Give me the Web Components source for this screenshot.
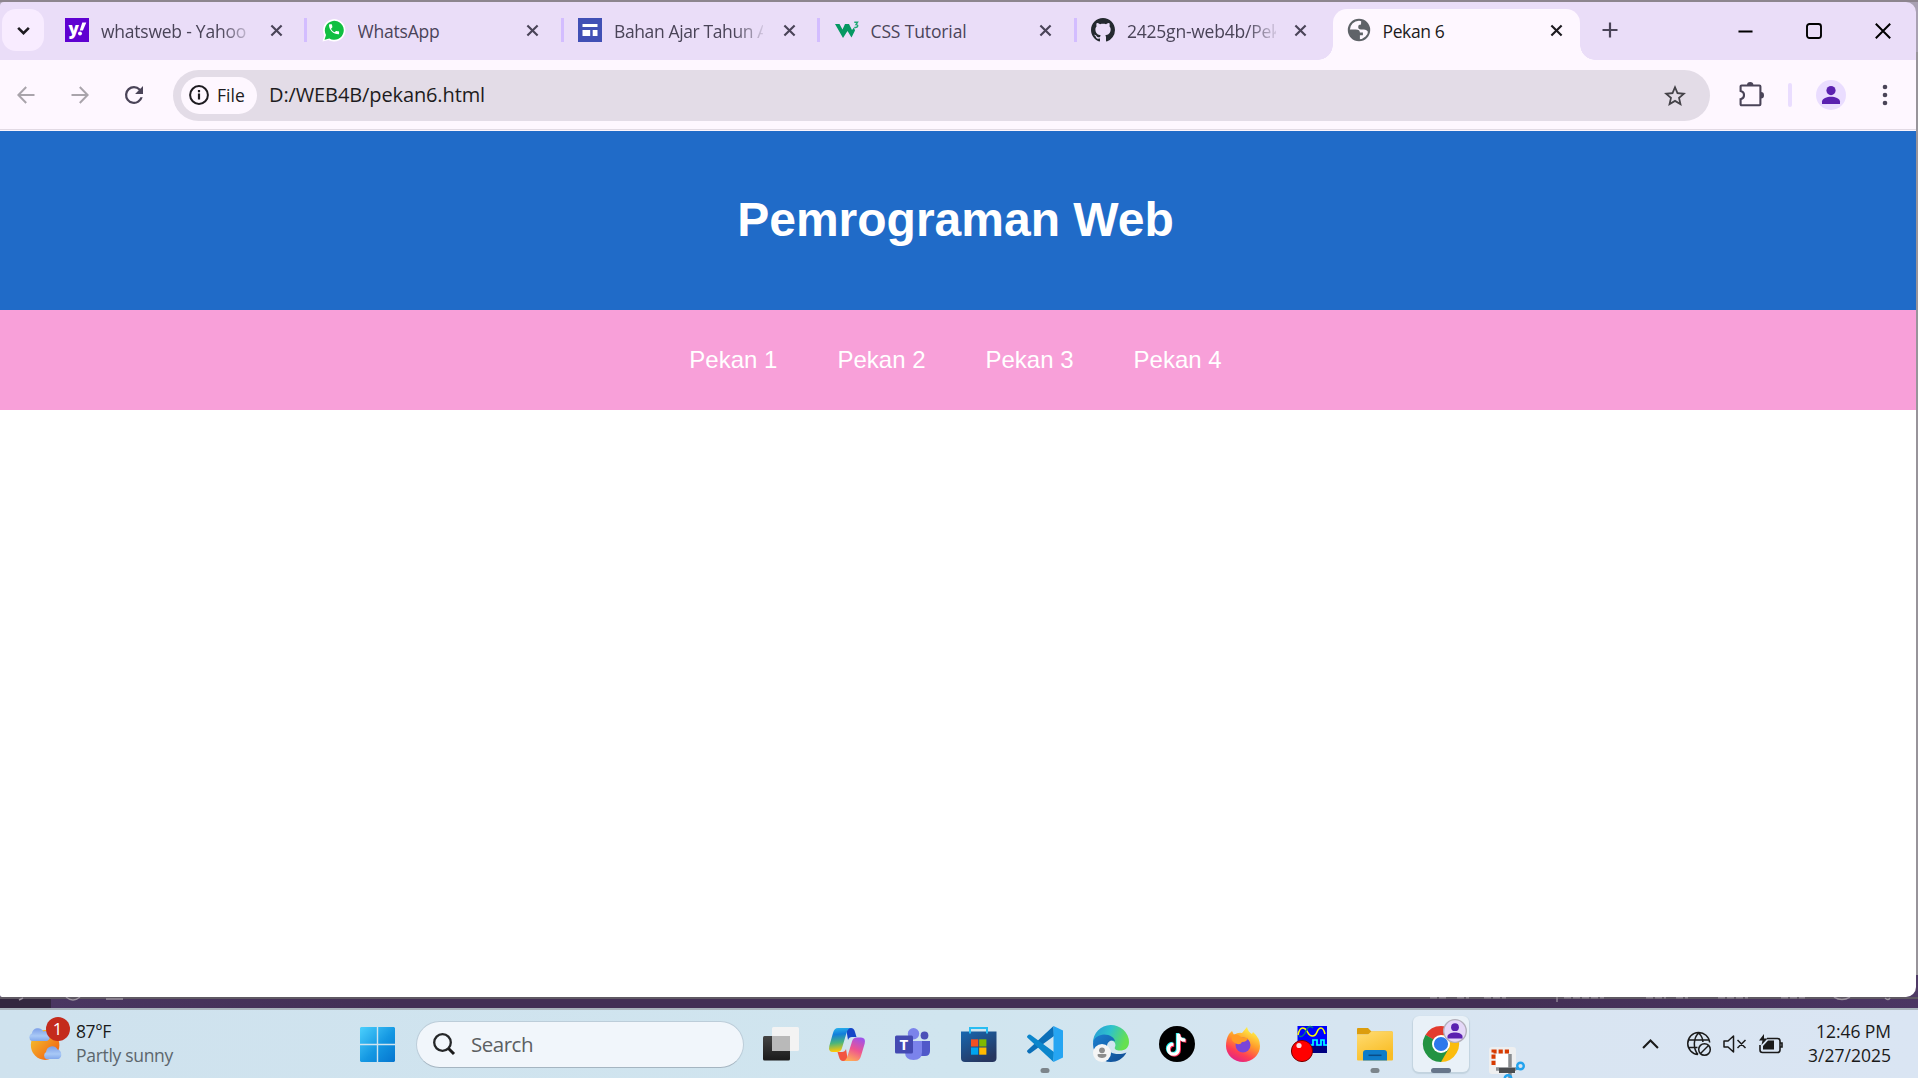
<!DOCTYPE html>
<html lang="en">
<head>
<meta charset="utf-8">
<title>Pekan 6</title>
<style>
html,body{margin:0;height:100%;overflow:hidden}
body{font-family:"Open Sans","Noto Sans",sans-serif}
</style>
</head>
<body>
<desk-top></desk-top>
<script>
const ICONS = {
down:['0 0 14 14','<path d="M2 4.5l5 5 5-5" fill="none" stroke="#1d1b20" stroke-width="2.4"/>'],
x:['0 0 14 14','<path d="M1.5 1.5l11 11M12.500 1.500l-11 11" stroke="currentColor" stroke-width="2.3"/>'],
yahoo:['0 0 24 24','<path d="M0 0h24v24H0z" fill="#5f01d1"/><text x="3.500" y="17" font-family="Open Sans" font-weight="800" font-size="17" fill="#fff">y</text><path d="M17.300 4.500h4l-3.400 8h-3.200z" fill="#fff"/><circle cx="15" cy="15.500" r="2" fill="#fff"/>'],
whatsapp:['0 0 24 24','<path d="M.5 23.500l1.800-6A11.200 11.200 0 1 1 6.500 21.900z" fill="#fff"/><path d="M2.500 21.700l1.500-4.800A9.500 9.500 0 1 1 7.400 20.400z" fill="#10bf41"/><path transform="translate(5.300 4.600) scale(.56)" fill="#fff" d="M6.620 10.790c1.440 2.830 3.760 5.140 6.590 6.590l2.200-2.200c.27-.27.67-.36 1.020-.24 1.120.37 2.330.57 3.570.57.55 0 1 .45 1 1V20c0 .55-.45 1-1 1-9.390 0-17-7.610-17-17 0-.55.45-1 1-1h3.500c.55 0 1 .45 1 1 0 1.250.2 2.450.57 3.570.11.35.03.74-.25 1.020l-2.200 2.200z"/>'],
sites:['0 0 24 24','<path d="M0 0h24v24H0z" fill="#4050b5"/><path d="M4.500 6h15v3h-15zM4.500 12h7.700v6H4.500zM14.700 12h4.800v6h-4.800z" fill="#fff"/>'],
w3:['0 0 24 24','<path d="M0 6h4.500l3 5.500L10 6h4l3 6 2-2.500 1 3-3.500 7L12.500 13 8 20z" fill="#059862"/><path d="M19.300 4.300h3.200L21 6.500c2.600 0 2.300 3.700-1.700 2.900" fill="none" stroke="#20a873" stroke-width="1.400"/>'],
github:['0 0 16 16','<path fill="#24292f" d="M8 0C3.580 0 0 3.580 0 8c0 3.540 2.290 6.530 5.470 7.590.4.070.55-.17.55-.38 0-.19-.01-.82-.01-1.490-2.010.37-2.530-.49-2.690-.94-.09-.23-.48-.94-.82-1.130-.28-.15-.68-.52-.01-.53.63-.01 1.080.58 1.230.82.72 1.210 1.870.87 2.330.66.07-.52.28-.87.51-1.070-1.780-.2-3.640-.89-3.640-3.950 0-.87.31-1.590.82-2.150-.08-.2-.36-1.020.08-2.120 0 0 .67-.21 2.200.82.64-.18 1.320-.27 2-.27s1.360.09 2 .27c1.530-1.040 2.200-.82 2.200-.82.44 1.100.16 1.920.08 2.120.51.56.82 1.270.82 2.150 0 3.070-1.870 3.750-3.650 3.950.29.25.54.73.54 1.480 0 1.070-.01 1.930-.01 2.200 0 .21.15.46.55.38A8.010 8.010 0 0 0 16 8c0-4.420-3.580-8-8-8z"/>'],
globe:['1.3 1.3 21.4 21.4','<circle cx="12" cy="12" r="9.100" fill="#fef7ff" stroke="#5f6368" stroke-width="1.800"/><path fill="#5f6368" d="M3 11.500h6c2.800 0 3.800 1 3.800 2.800h2.700v2.400h-2.700v4.200C8 21.500 3.200 17.500 3 11.500zM14 3c3.800.8 6.900 4.600 7 9.500l-.7 1.700c-1-2-2.300-2.700-4-2.700h-2.500c-2 0-2.500-1-2.500-2.200 0-1.700 1-2.300 2.500-2.300z"/>'],
plus:['0 0 16 16','<path d="M8 .5v15M.5 8h15" stroke="#4a4458" stroke-width="2.200"/>'],
min:['0 0 16 16','<path d="M.5 8h15" stroke="#000" stroke-width="2"/>'],
max:['0 0 16 16','<rect x="1" y="1" width="14" height="14" rx="2.500" fill="none" stroke="#000" stroke-width="1.900"/>'],
close:['0 0 16 16','<path d="M.8.8l14.400 14.400M15.200.8L.8 15.200" stroke="#000" stroke-width="2"/>'],
back:['0 0 18 18','<path d="M17.500 9H1.500M9.200 1L1.400 9l7.800 8" fill="none" stroke="#a9a4ab" stroke-width="2"/>'],
fwd:['0 0 18 18','<path d="M.5 9h16M8.800 1l7.800 8-7.800 8" fill="none" stroke="#a9a4ab" stroke-width="2"/>'],
reload:['4 4 16 16','<path fill="#4a4458" d="M17.650 6.350A7.950 7.950 0 0 0 12 4a8 8 0 1 0 7.730 10h-2.080A6 6 0 1 1 12 6c1.660 0 3.140.69 4.220 1.780L13 11h7V4z"/>'],
info:['0 0 20 20','<circle cx="10" cy="10" r="8.900" fill="none" stroke="#1d1b20" stroke-width="2"/><path d="M10 8.600v6M10 5v2.200" stroke="#1d1b20" stroke-width="2.200"/>'],
star:['2 2 20 19','<path fill="#454349" d="M22 9.240l-7.190-.62L12 2 9.190 8.630 2 9.240l5.460 4.730L5.820 21 12 17.270 18.180 21l-1.630-7.030zM12 15.400l-3.760 2.270 1-4.280-3.320-2.880 4.380-.38L12 6.100l1.710 4.040 4.380.38-3.320 2.880 1 4.280z"/>'],
puzzle:['0 0 25 25','<path d="M1.600 4.500q0-1 1-1h17.800q1 0 1 1v17.800q0 1-1 1H2.600q-1 0-1-1v-5.100c4.600-1 4.600-7.200 0-8.200z" fill="none" stroke="#4a4458" stroke-width="2.100"/><path d="M8 3a3.200 3 0 0 1 6.400 0zM22 10a3 3.200 0 0 1 0 6.400z" fill="#4a4458"/>'],
profile:['0 0 30 30','<circle cx="15" cy="15" r="15" fill="#eaddff"/><circle cx="15" cy="10.600" r="4.600" fill="#5b21b0"/><path d="M6 24v-2.500c0-3 5-4.800 9-4.800s9 1.800 9 4.800V24z" fill="#5b21b0"/>'],
dots:['0 0 6 22','<g fill="#4a4458"><circle cx="3" cy="3" r="2.300"/><circle cx="3" cy="11" r="2.300"/><circle cx="3" cy="19" r="2.300"/></g>'],
weather:['0 0 40 34','<defs><linearGradient id="s" x1="0" y1="0" x2="1" y2="1"><stop offset=".2" stop-color="#f3b52b"/><stop offset=".8" stop-color="#f36c16"/></linearGradient><linearGradient id="c" x2="0" y2="1"><stop stop-color="#7d9fe8"/><stop offset=".6" stop-color="#a9c9f6"/><stop offset="1" stop-color="#83a8ec"/></linearGradient></defs><circle cx="18" cy="18" r="15" fill="url(#s)"/><path d="M4 14a4 4 0 0 1 0-7.500 6.500 6.500 0 0 1 12-2A5 5 0 0 1 20 14z" fill="url(#c)"/><path d="M19 32a4 4 0 0 1 0-7 6.500 6.500 0 0 1 12-2.500 5 5 0 0 1 1 9.500z" fill="url(#c)"/>'],
windows:['0 0 35 35','<defs><linearGradient id="w" x1="0" y1="0" x2="1" y2="1"><stop stop-color="#4cd0fd"/><stop offset=".55" stop-color="#1497e2"/><stop offset="1" stop-color="#0575cf"/></linearGradient></defs><path d="M1 0h15.800v16.800H0V1zM18.200 0H34l1 1v15.800H18.200zM0 18.200h16.800V35H1l-1-1zM18.200 18.200H35V34l-1 1H18.200z" fill="url(#w)"/>'],
search:['0 0 22 22','<circle cx="9.500" cy="9.500" r="8.300" fill="none" stroke="#242628" stroke-width="2.300"/><path d="M15.500 15.500l5.500 5.500" stroke="#1b1b1b" stroke-width="3"/>'],
taskview:['0 0 36 34','<defs><linearGradient id="a" x2="0" y2="1"><stop stop-color="#444"/><stop offset="1" stop-color="#1a1a1a"/></linearGradient></defs><rect y="9" width="27" height="24.500" rx="1.500" fill="url(#a)"/><rect x="9" width="27" height="24" rx="1.500" fill="#f3f3f3"/><path d="M9 9h18v15H9z" fill="#b9b9b9"/>'],
copilot:['0 0 36 33','<defs><linearGradient id="l" x2=".1" y2="1"><stop stop-color="#2bb7ee"/><stop offset=".3" stop-color="#127edb"/><stop offset=".65" stop-color="#4ab57c"/><stop offset="1" stop-color="#ffc805"/></linearGradient><linearGradient id="r" x1=".7" y1="0" x2=".3" y2="1"><stop stop-color="#a052e9"/><stop offset=".5" stop-color="#ee5590"/><stop offset="1" stop-color="#ffae55"/></linearGradient></defs><path d="M17 0h5q3 0 4 4l1.500 5H23q-3 0-4 3z" fill="#1546c8"/><path d="M19 33h-5q-3 0-4-4l-1.500-5H13q3 0 4-3z" fill="#f25540"/><path d="M9 0h13q-3 0-4.500 5L13 20q-1 4-5 4H4q-5 0-3.700-6L4 5q1.300-5 5-5z" fill="url(#l)"/><path d="M27 33H14q3 0 4.500-5L23 13.500q1-4 5-4h4q5 0 3.700 6L32 28q-1.300 5-5 5z" fill="url(#r)"/>'],
teams:['0 0 36 33','<circle cx="29.500" cy="7.500" r="3.900" fill="#4b50b8"/><circle cx="18.500" cy="5.700" r="5.700" fill="#7b83eb"/><path d="M24 13h11v10q0 5-5 5h-6z" fill="#5059c9"/><path d="M10 13h17v11q0 8-8.500 8T10 24z" fill="#7b83eb"/><rect y="7.500" width="18" height="18" rx="1.500" fill="#444ab2"/><text x="4.500" y="22" font-family="Open Sans" font-size="15" font-weight="700" fill="#fff">T</text>'],
store:['0 0 36 36','<defs><linearGradient id="b" x2="0.600" y2="1"><stop stop-color="#1767b1"/><stop offset="1" stop-color="#26365f"/></linearGradient></defs><path d="M0 5.500h35.500V32q0 4-4 4H4q-4 0-4-4z" fill="url(#b)"/><path d="M9 7.500V2h17v5.500" fill="none" stroke="#28bdf2" stroke-width="2"/><path d="M10 13.300h7.200v7.200H10z" fill="#f25022"/><path d="M18.200 13.300h7.200v7.200h-7.200z" fill="#7fba00"/><path d="M10 21.500h7.200v7.200H10z" fill="#00a4ef"/><path d="M18.200 21.500h7.200v7.200h-7.200z" fill="#ffb900"/>'],
vscode:['0 0 36 36','<path d="M26.500 0L27 10 3.500 27.200q-1 .7-2 0L.3 26q-.7-1 .2-1.800z" fill="#0b6fb8"/><path d="M26.500 36L27 26 3.500 8.800q-1-.7-2 0L.3 10q-.7 1 .2 1.800z" fill="#0b86cc"/><path d="M26.500 0L36 4.500v27L26.500 36z" fill="#26a5f2"/>'],
edge:['0 0 36 36','<defs><linearGradient id="e" x2="1" y2=".3"><stop stop-color="#2797d8"/><stop offset=".5" stop-color="#2ec2cc"/><stop offset="1" stop-color="#66e050"/></linearGradient><linearGradient id="f" x2="1" y2="1"><stop stop-color="#1b7fd0"/><stop offset="1" stop-color="#104a90"/></linearGradient></defs><path d="M0 17A18 17.500 0 0 1 36 16c0 6-4 8.500-9 8.500-4 0-6-1.500-5-3.500 1-1.500 1-6-5-7C10 12.500 2 12 0 17z" fill="url(#e)"/><path d="M0 18C0 12 6 8.500 11 8.500c6 0 11 3.500 11 7-2-2-8-1-8 5 0 7 11 9.500 19.500 6C30 33 24 36 18 36 8 36 0 28 0 18z" fill="url(#f)"/><circle cx="9" cy="27" r="9" fill="#f5f5f5"/><circle cx="9" cy="24.300" r="2.900" fill="#8d8d8d"/><path d="M4.500 29q0-1 1-1h7q1 0 1 1c0 4-9 4-9 0z" fill="#8d8d8d"/>'],
tiktok:['0 0 36 36','<circle cx="18" cy="18" r="18" fill="#000"/><g fill="none" stroke-width="3.300"><path d="M18.500 7v15.500a5 5 0 1 1-5-5M18.500 7c0 4 3 6.500 7 6.500" stroke="#25f4ee"/><path d="M20.300 8.500V24a5 5 0 1 1-5-5M20.300 8.500c0 4 3 6.500 7 6.500" stroke="#fe2c55"/><path d="M19.400 7.700v15.500a5 5 0 1 1-5-5M19.400 7.700c0 4 3 6.500 7 6.500" stroke="#fff"/></g>'],
firefox:['0 0 34 35','<defs><linearGradient id="g" x1=".8" y1="0" x2=".3" y2="1"><stop offset=".1" stop-color="#ffec45"/><stop offset=".45" stop-color="#ff9a2a"/><stop offset=".75" stop-color="#ff4053"/><stop offset="1" stop-color="#e0218a"/></linearGradient></defs><path d="M3 7l3-3 2 4q4-3 8-2l5-6q1 5 5 7l1-2q7 6 7 14a17 16 0 0 1-34 0Q0 12 3 7z" fill="url(#g)"/><circle cx="17" cy="18" r="7.500" fill="#7a45d8"/><path d="M6 8q5-2 9 2l7 1q-1 4-6 4-2 4-7 1-5-3-3-8z" fill="#ff9a26"/>'],
record:['0 0 36 36','<path d="M6.500 0H36v27H6.500z" fill="#00f"/><path d="M6.500 20H36v7H6.500z" fill="#000080"/><path d="M7 9q1.500-7 4.500-7t5 4 5 4 4.500-4 4-4 4 6" fill="none" stroke="#ff0" stroke-width="1.600"/><path d="M8 10q4 2 7-5t7-3" fill="none" stroke="#087c7c" stroke-width="1.500"/><path d="M18 19h4v-5h4v5h4v-5h3v5h3" fill="none" stroke="#0ff" stroke-width="1.700"/><circle cx="11" cy="25" r="10.600" fill="#f00" stroke="#700" stroke-width="1"/><circle cx="8" cy="19.500" r="2.600" fill="#ffdede"/>'],
folder:['0 0 36 33','<defs><linearGradient id="h" x2=".5" y2="1"><stop stop-color="#ffdc73"/><stop offset="1" stop-color="#f9bd25"/></linearGradient></defs><path d="M0 1q0-1 1-1h10l3.500 3.500H35v3H0z" fill="#dc9d0d"/><path d="M0 6.500h11l3.500-3.200H35q1 0 1 1V31.500q0 1-1 1H1q-1 0-1-1z" fill="url(#h)"/><path d="M6 32.500V25q0-3 3-3h18q3 0 3 3v7.500z" fill="#0f7cc9"/><path d="M11.500 27.300h13" stroke="#0a4c86" stroke-width="1.500"/>'],
chrome:['0 0 36 36','<path d="M18 18L2.400 9A18 18 0 0 1 33.600 9z" fill="#e33b2e"/><path d="M18 18L2.400 9A18 18 0 0 0 18 36l8-14z" fill="#229342"/><path d="M18 18v18A18 18 0 0 0 33.600 9H18z" fill="#fbbc0e"/><path d="M2.400 9L10.200 22.500 18 36l7.800-13.500L18 18z" fill="#229342"/><circle cx="18" cy="18" r="9" fill="#fff"/><circle cx="18" cy="18" r="7.100" fill="#2d78ec"/>'],
badge:['0 0 24 24','<circle cx="12" cy="12" r="11.300" fill="#e5d8f8" stroke="#b3afba" stroke-width="1.300"/><circle cx="12" cy="8.200" r="3.900" fill="#5b21b0"/><path d="M4.500 19.500v-2c0-2.500 4-4 7.500-4s7.500 1.500 7.500 4v2z" fill="#5b21b0"/>'],
snip:['0 0 36 31','<rect width="27" height="27" rx="3" fill="#eeeff0"/><path d="M4.500 18V4.500H20" fill="none" stroke="#d83b01" stroke-width="4" stroke-dasharray="4.200 2"/><rect x="7" y="7" width="14" height="13" fill="#fff"/><path d="M21 7v24M7 22h20" stroke="#8a8d90" stroke-width="3.500"/><path d="M10 23.500h16" stroke="#4b4d50" stroke-width="5"/><path d="M27 22l3-1" stroke="#1b93dd" stroke-width="2.500"/><circle cx="31.500" cy="19" r="3.300" fill="none" stroke="#23a3ee" stroke-width="2.400"/><circle cx="19" cy="31.500" r="3.300" fill="none" stroke="#23a3ee" stroke-width="2.400"/>'],
up:['0 0 16 10','<path d="M1 9l7-7.500L15 9" fill="none" stroke="#1a1a1a" stroke-width="1.900"/>'],
net:['0 0 24 24','<g fill="none" stroke="#1a1a1a" stroke-width="1.500"><path d="M11 22.500A11 11 0 1 1 22.700 10.500M1.500 8h21M1.500 15.500h9M11 22.500C6 17 6 6 11.700 1c3 3 4.200 6 4.200 9"/><circle cx="17.500" cy="17.500" r="5.800"/><path d="M13.500 21.500l8-8"/></g>'],
mute:['0 0 24 18','<path d="M1 6h4l5.500-5v16L5 12H1zM14.500 5l8 8M22.500 5l-8 8" fill="none" stroke="#1a1a1a" stroke-width="1.500" stroke-linejoin="round"/>'],
battery:['0 0 24 20','<path d="M8 4.500h10.500q2.500 0 2.500 2.500v9q0 2.500-2.500 2.500H3.500Q1 18.500 1 16v-5M21 9h2v4h-2" fill="none" stroke="#1a1a1a" stroke-width="1.600"/><path d="M4 15.500V12l5-5.500h6v9z" fill="#1a1a1a"/><path d="M5 0L0 6.500h3.500L2.500 11l6-6.500H5z" fill="#1a1a1a"/>']
};

class Base extends HTMLElement {
  constructor(){ super(); this.attachShadow({mode:'open'}); }
  connectedCallback(){ this.shadowRoot.innerHTML = this.view(); if(this.ready) this.ready(); }
  a(n,d=''){ return this.getAttribute(n) ?? d; }
}
/* An inline SVG from the icon table: <ui-icon name w h> */
customElements.define('ui-icon', class extends Base {
  view(){ const [vb,body]=ICONS[this.a('name')], w=this.a('w'), h=this.a('h',w);
    return `<style>:host{display:block;flex:none;width:${w}px;height:${h}px}svg{display:block;overflow:visible}</style><svg width="${w}" height="${h}" viewBox="${vb}" preserveAspectRatio="none">${body}</svg>`; }
});
/* One line of text whose tracking is adjusted to fill a given width */
customElements.define('fit-text', class extends Base {
  view(){ return `<style>:host{display:block;white-space:pre;line-height:24px}span{display:inline-block}</style><span><slot></slot></span>`; }
  ready(){ const s=this.shadowRoot.querySelector('span'), n=this.textContent.length, w=s.getBoundingClientRect().width;
    if(w) s.style.letterSpacing=((+this.a('w')-w)/n)+'px'; }
});
customElements.define('browser-tab', class extends Base {
  view(){ const on=this.hasAttribute('active');
    return `<style>
    :host{display:flex;flex:none;box-sizing:border-box;width:256.5px;height:51px;padding:0 0 9px 14.5px;align-items:center;color:#4a4458;font-size:17.5px}
    :host([active]){width:247px;padding-left:13.5px;color:#1d1b20;background:#fef7ff;border-radius:14px 14px 0 0;position:relative}
    :host([active])::before,:host([active])::after{content:"";position:absolute;bottom:0;width:15px;height:15px;background:radial-gradient(circle at 0 0,transparent 14.500px,#fef7ff 15px)}
    :host([active])::before{left:-15px}
    :host([active])::after{right:-15px;background:radial-gradient(circle at 100% 0,transparent 14.500px,#fef7ff 15px)}
    .t{width:149px;margin:1px 19.5px 0 12px;overflow:hidden}
    :host([active]) .t,:host([last]) .t{margin-right:18px}
    :host([fade]) .t{-webkit-mask:linear-gradient(90deg,#000 120px,transparent 154px)}
    i{width:3px;height:24px;background:#d3bdff;margin-left:21.500px}
    </style><ui-icon name="${this.a('icon')}" w="24"></ui-icon>
    <div class="t"><slot></slot></div><ui-icon name="x" w="13"></ui-icon>${on||this.hasAttribute('last')?'':'<i></i>'}`; }
});
customElements.define('tab-strip', class extends Base {
  view(){ return `<style>
    :host{display:flex;height:58px;background:#eaddf8;padding-left:2px;box-sizing:border-box;align-items:flex-end}
    .s{width:42px;height:42px;border-radius:14px;background:#f8ecff;display:flex;align-items:center;justify-content:center;margin:0 6.500px 9px 0;flex:none}
    .c{display:flex;align-items:center;height:42px;padding-bottom:8px;margin-left:auto;gap:53px;padding-right:25px}
    .p{margin:0 0 22px 22px}
    </style><div class="s"><ui-icon name="down" w="15"></ui-icon></div>
    <browser-tab icon="yahoo" fade><fit-text w="145">whatsweb - Yahoo</fit-text></browser-tab>
    <browser-tab icon="whatsapp"><fit-text w="82">WhatsApp</fit-text></browser-tab>
    <browser-tab icon="sites" fade><fit-text w="154">Bahan Ajar Tahun A</fit-text></browser-tab>
    <browser-tab icon="w3"><fit-text w="96">CSS Tutorial</fit-text></browser-tab>
    <browser-tab icon="github" fade last><fit-text w="153">2425gn-web4b/Pek</fit-text></browser-tab>
    <browser-tab icon="globe" active><fit-text w="62">Pekan 6</fit-text></browser-tab>
    <ui-icon class="p" name="plus" w="16"></ui-icon>
    <div class="c"><ui-icon name="min" w="15"></ui-icon><ui-icon name="max" w="16"></ui-icon><ui-icon name="close" w="16"></ui-icon></div>`; }
});
customElements.define('tool-bar', class extends Base {
  view(){ return `<style>
    :host{display:flex;height:71px;box-sizing:border-box;background:#fef7ff;border-bottom:1px solid #fbf4fc;box-shadow:inset 0 -1px #e2dae4;align-items:center;padding-left:17px;color:#1d1b20}
    .n{display:flex;gap:36px;width:156px;align-items:center}
    .o{display:flex;align-items:center;width:1537px;height:51px;border-radius:26px;background:#e3dce7;box-sizing:border-box;padding:0 24px 0 8px}
    .f{display:flex;align-items:center;gap:8px;width:76px;height:37px;border-radius:19px;background:#fef7ff;box-sizing:border-box;padding-left:8px;font-size:17.500px;font-weight:500;margin-right:12px}
    .u{font-size:20px;flex:1}
    i{width:3.500px;height:24px;border-radius:2px;background:#eaddff;margin:0 24.500px 0 24px}
    .d{margin-left:36px}.z{margin-left:29px;margin-bottom:1px}
    </style><div class="n"><ui-icon name="back" w="18"></ui-icon><ui-icon name="fwd" w="18"></ui-icon><ui-icon name="reload" w="18"></ui-icon></div>
    <div class="o"><div class="f"><ui-icon name="info" w="20"></ui-icon><fit-text w="28">File</fit-text></div>
    <div class="u"><fit-text w="216">D:/WEB4B/pekan6.html</fit-text></div><ui-icon name="star" w="22" h="21"></ui-icon></div>
    <ui-icon class="z" name="puzzle" w="25"></ui-icon><i></i><ui-icon name="profile" w="30"></ui-icon><ui-icon class="d" name="dots" w="6" h="22"></ui-icon>`; }
});
customElements.define('web-page', class extends Base {
  view(){ return `<style>
    :host{display:block;flex:1;background:#fff;font-family:"Liberation Sans",Arial,sans-serif;color:#fff}
    header{height:179px;background:#206bc8;display:flex;align-items:center;justify-content:center;box-sizing:border-box;padding:0 5px 2px 0}
    h1{margin:0;font-size:48px;line-height:55px}
    nav{height:100px;background:#f8a0d9;display:flex;align-items:center;justify-content:center;gap:60px;font-size:24px;padding-right:5px}
    </style><header><h1>Pemrograman Web</h1></header><nav><span>Pekan 1</span><span>Pekan 2</span><span>Pekan 3</span><span>Pekan 4</span></nav>`; }
});
/* The lower edge of the editor window that lies behind the browser */
customElements.define('status-edge', class extends Base {
  view(){ return `<style>:host{display:block;height:11px;background:linear-gradient(90deg,#33273f 51px,#4a3661 51px,#432f55 400px,#432f55 1500px,#4b3663);border-top:2px solid #5f5963;box-sizing:border-box}svg{display:block;margin-top:-2px}</style>
    <svg width="1918" height="9" fill="none" stroke="#9b939f" stroke-width="1.500"><path d="M19 3l4-2M66 0q7 6 14 0M106 2h17M1834 0q8 5 16 0M1885 1q3 3 5 0"/><path d="M1430 .7h18M1457 .7h12M1484 .7h22M1557 0v5M1564 .7h40M1646 .7h20M1676 .7h12M1718 .7h30M1781 .7h24" stroke-dasharray="7 2" opacity=".8"/></svg>`; }
});
customElements.define('app-slot', class extends Base {
  view(){ return `<style>:host{display:flex;flex:none;width:56px;height:56px;border-radius:6px;position:relative;align-items:center;justify-content:center;margin-right:10px}
    :host([active]){background:#e9f1f8;box-shadow:0 1px 1px 1px #c3d3df}
    i{position:absolute;bottom:-1px;left:50%;translate:-50% 0;width:9px;height:5px;border-radius:3px;background:#7c858b}
    :host([active]) i{width:20px;background:#66758a}
    .b{position:absolute;right:2px;top:3px}
    </style><ui-icon name="${this.a('icon')}" w="${this.a('w','36')}" h="${this.a('h','36')}"></ui-icon>${this.hasAttribute('active')?'<ui-icon class="b" name="badge" w="24"></ui-icon>':''}${this.hasAttribute('run')?'<i></i>':''}`; }
});
customElements.define('task-bar', class extends Base {
  view(){ return `<style>
    :host{display:flex;height:70px;box-sizing:border-box;border-top:2px solid #a9b4bc;background:linear-gradient(90deg,#cfe2ee,#d0e5ef 50%,#d9e5f2 80%,#dae5f3);align-items:center;color:#1a1a1a;font-size:17.500px}
    .w{display:flex;width:331px;padding-left:28px;margin-right:1px;gap:10px;align-items:center;position:relative}
    .w>div{padding-bottom:2px}
    .w b{position:absolute;left:45.500px;top:-2px;width:24px;height:24px;border-radius:50%;background:#c42b1c;color:#fff;font-weight:400;line-height:24px;text-align:center;font-size:17px}
    .g{color:#5c666c}
    .s{display:flex;align-items:center;gap:16px;box-sizing:border-box;width:328px;height:47px;border:1.500px solid #bccdd9;border-bottom-color:#a5b5c1;border-radius:24px;background:#f1f6fb;margin:0 9px 0 21px;padding-left:16px;font-size:20.500px;color:#5c5f62}
    .q{display:flex;align-items:center;flex:1}
    .q ui-icon{margin-right:12px}
    .r{margin:0 27px 0 auto;padding-bottom:2px;display:flex;flex-direction:column;align-items:flex-end}
    .v{align-self:flex-end;overflow:hidden;height:31px;margin-left:10px}
    </style>
    <div class="w"><ui-icon name="weather" w="38" h="34"></ui-icon><b>1</b><div><fit-text w="35">87°F</fit-text><fit-text class="g" w="97">Partly sunny</fit-text></div></div>
    <ui-icon name="windows" w="35"></ui-icon>
    <div class="s"><ui-icon name="search" w="22"></ui-icon><fit-text w="62">Search</fit-text></div>
    <app-slot icon="taskview" h="34"></app-slot><app-slot icon="copilot" h="33"></app-slot><app-slot icon="teams" h="33"></app-slot><app-slot icon="store"></app-slot><app-slot icon="vscode" run></app-slot><app-slot icon="edge"></app-slot><app-slot icon="tiktok"></app-slot><app-slot icon="firefox" w="34" h="35"></app-slot><app-slot icon="record"></app-slot><app-slot icon="folder" h="33" run></app-slot><app-slot icon="chrome" run active></app-slot>
    <ui-icon class="v" name="snip" w="36" h="31"></ui-icon>
    <div class="q"><ui-icon style="margin:0 28px 0 117px" name="up" w="17" h="10"></ui-icon><ui-icon name="net" w="24"></ui-icon><ui-icon name="mute" w="24" h="18"></ui-icon><ui-icon name="battery" w="24" h="20"></ui-icon>
    <div class="r"><fit-text w="75">12:46 PM</fit-text><fit-text w="83">3/27/2025</fit-text></div></div>`; }
});
customElements.define('browser-window', class extends Base {
  view(){ return `<style>:host{display:flex;flex-direction:column;height:995px;width:1916px;border-radius:4px 10px 10px 2px;overflow:hidden}</style><slot></slot>`; }
});
customElements.define('desk-top', class extends Base {
  view(){ return `<style>:host{display:flex;flex-direction:column;box-sizing:border-box;width:1918px;height:1078px;padding-top:2px;overflow:hidden;background:linear-gradient(#8d858e 2px,#a9a1b2 2px,#a9a1b2 52px,#98949a 52px,#98949a 975px,#4f3b66 975px)}</style>
    <browser-window><tab-strip></tab-strip><tool-bar></tool-bar><web-page></web-page></browser-window><status-edge></status-edge><task-bar></task-bar>`; }
});
</script>
</body>
</html>
